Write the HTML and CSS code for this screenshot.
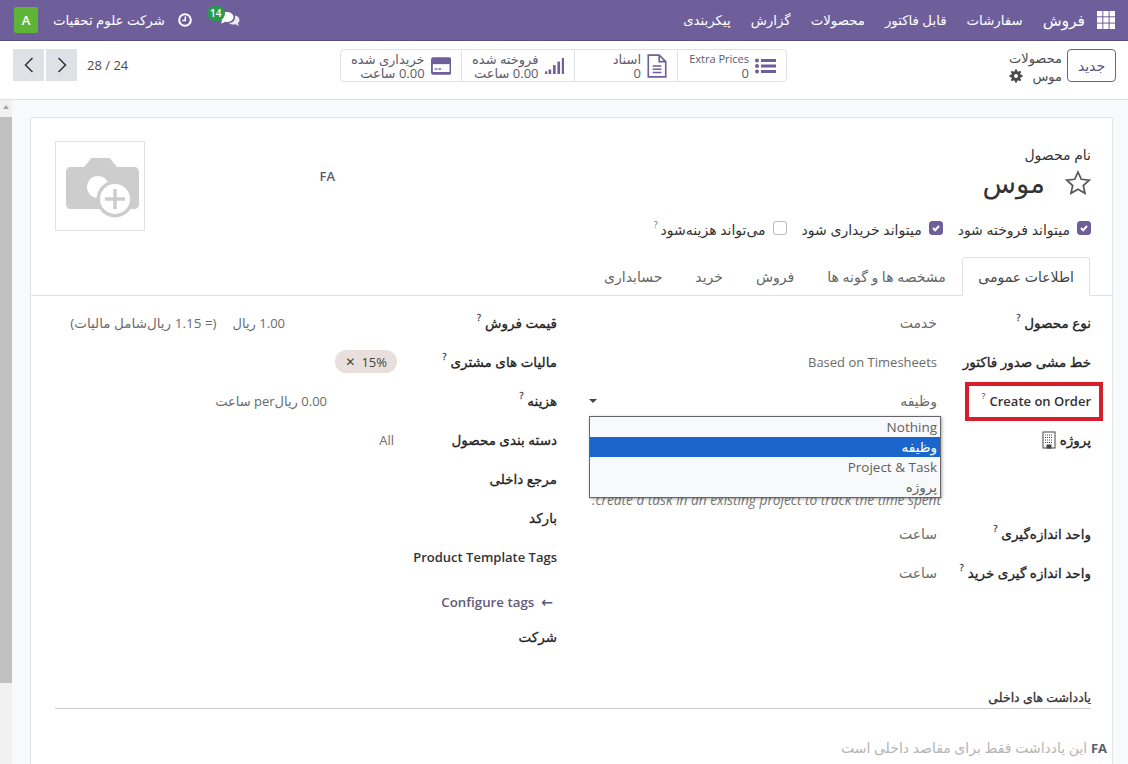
FILE: index.html
```html
<!DOCTYPE html>
<html lang="fa" dir="rtl">
<head>
    <meta charset="UTF-8">
    <title>موس</title>
    <link rel="stylesheet" href="styles.css">
</head>
<body>

    <!-- top menu -->
    <header class="navbar">
        <nav class="nav-menu">
            <svg class="apps-icon" viewBox="0 0 18 18" width="18" height="18" fill="#fff">
                <rect x="0" y="0" width="5.3" height="5.3"/><rect x="6.3" y="0" width="5.3" height="5.3"/><rect x="12.6" y="0" width="5.4" height="5.3"/>
                <rect x="0" y="6.3" width="5.3" height="5.3"/><rect x="6.3" y="6.3" width="5.3" height="5.3"/><rect x="12.6" y="6.3" width="5.4" height="5.3"/>
                <rect x="0" y="12.6" width="5.3" height="5.4"/><rect x="6.3" y="12.6" width="5.3" height="5.4"/><rect x="12.6" y="12.6" width="5.4" height="5.4"/>
            </svg>
            <a class="nav-brand">فروش</a>
            <a class="nav-link">سفارشات</a>
            <a class="nav-link">قابل فاکتور</a>
            <a class="nav-link">محصولات</a>
            <a class="nav-link">گزارش</a>
            <a class="nav-link">پیکربندی</a>
        </nav>
        <div class="nav-tools">
            <div class="chat-tool">
                <svg viewBox="0 0 20 16" width="20" height="16" fill="#fff">
                    <path d="M7 1c3.6 0 6.5 2.2 6.500 5s-2.900 5-6.500 5c-.8 0-1.500-.1-2.200-.3C3.600 11.700 2 12.200.6 12.300c.8-.8 1.400-1.800 1.500-2.900C1 8.500.5 7.300.5 6 .5 3.200 3.400 1 7 1z"/>
                    <path d="M15 4.500c2.600.5 4.500 2.300 4.500 4.400 0 1.200-.6 2.300-1.600 3.100.1 1 .6 2 1.400 2.700-1.300-.1-2.700-.6-3.800-1.500-.6.2-1.300.3-2 .3-1.800 0-3.400-.6-4.500-1.600 4 .1 6.700-2.700 6-7.400z" opacity=".85"/>
                </svg>
                <span class="chat-badge">14</span>
            </div>
            <svg class="clock-icon" viewBox="0 0 14 14" width="14" height="14">
                <circle cx="7" cy="7" r="5.800" fill="none" stroke="#fff" stroke-width="2"/>
                <path d="M7.300 3.500v4H4.300" fill="none" stroke="#fff" stroke-width="1.500"/>
            </svg>
            <span class="company">شرکت علوم تحقیات</span>
            <span class="avatar">A</span>
        </div>
    </header>

    <!-- breadcrumb, stat buttons, pager -->
    <section class="control-panel">
        <button class="btn-new">جدید</button>
        <div class="breadcrumb">
            <div>محصولات</div>
            <div class="crumb-current">موس
                <svg viewBox="0 0 14 14" width="14" height="14" fill="#4a4a4a"><path d="M6 0.500h2l.3 1.800 1.200.5L11 1.700l1.300 1.300-1.100 1.500.5 1.200 1.800.3v2l-1.800.3-.5 1.200 1.100 1.500L11 12.300l-1.500-1.100-1.200.5-.3 1.800H6l-.3-1.800-1.200-.5L3 12.300 1.700 11l1.100-1.500-.5-1.200L.5 8V6l1.800-.3.5-1.200L1.700 3 3 1.700l1.500 1.100 1.200-.5zM7 5a2 2 0 100 4 2 2 0 000-4z" fill-rule="evenodd"/></svg>
            </div>
        </div>
        <div class="stat-group">
            <div class="stat stat-extra">
                <svg viewBox="0 0 21 16" width="21" height="16" fill="#6e5f9b"><circle cx="2" cy="2.500" r="2"/><circle cx="2" cy="8" r="2"/><circle cx="2" cy="13.500" r="2"/><rect x="6" y="1" width="15" height="3"/><rect x="6" y="6.500" width="15" height="3"/><rect x="6" y="12" width="15" height="3"/></svg>
                <div class="stat-text"><div class="stat-latin">Extra Prices</div><div>0</div></div>
            </div>
            <div class="stat stat-docs">
                <svg viewBox="0 0 18 22" width="20" height="24" fill="none" stroke="#6e5f9b" stroke-width="1.500"><path d="M1 1h10l6 6v14H1zM11 1v6h6"/><path d="M5 11h8M5 14h8M5 17h8"/></svg>
                <div class="stat-text"><div>اسناد</div><div>0</div></div>
            </div>
            <div class="stat stat-sold">
                <svg viewBox="0 0 22 20" width="22" height="20" fill="#6e5f9b"><rect x="0" y="16" width="2.500" height="3"/><rect x="4" y="14" width="3" height="5"/><rect x="9" y="9" width="3" height="10"/><rect x="14" y="5" width="3" height="14"/><rect x="19" y="1" width="3" height="18"/></svg>
                <div class="stat-text"><div>فروخته شده</div><div>0.00 ساعت</div></div>
            </div>
            <div class="stat stat-bought">
                <svg viewBox="0 0 22 19" width="23" height="20"><rect x="0" y="0" width="22" height="19" rx="2.500" fill="#6e5f9b"/><rect x="2" y="7.500" width="18" height="8.500" fill="#fff"/><rect x="4" y="12" width="3" height="1.500" fill="#6e5f9b"/><rect x="8" y="12" width="3" height="1.500" fill="#6e5f9b"/></svg>
                <div class="stat-text"><div>خریداری شده</div><div>0.00 ساعت</div></div>
            </div>
        </div>
        <div class="pager">
            <span class="pager-count" dir="ltr">28 / 24</span>
            <button class="pager-btn">
                <svg viewBox="0 0 12 18" width="12" height="18" fill="none" stroke="#333" stroke-width="1.500"><path d="M2.500 2l7 7-7 7"/></svg>
            </button>
            <button class="pager-btn">
                <svg viewBox="0 0 12 18" width="12" height="18" fill="none" stroke="#333" stroke-width="1.500"><path d="M9.500 2l-7 7 7 7"/></svg>
            </button>
        </div>
    </section>

    <main class="content">
        <div class="sheet">

            <div class="product-head">
                <div class="head-main">
                    <div class="name-label">نام محصول</div>
                    <div class="name-row">
                        <svg viewBox="0 0 26 26" width="26" height="26" fill="none" stroke="#555" stroke-width="1.700"><path d="M13 2l3.300 7.300 7.900.9-5.900 5.300 1.700 7.800L13 19.300l-7 4 1.700-7.800-5.900-5.300 7.900-.9z"/></svg>
                        <span class="name-value">موس</span>
                    </div>
                    <div class="options">
                        <label class="option"><span class="check check-on"><svg viewBox="0 0 10 10" width="10" height="10" fill="none" stroke="#fff" stroke-width="2"><path d="M2 5l2.200 2.200L8 3"/></svg></span>میتواند فروخته شود</label>
                        <label class="option"><span class="check check-on"><svg viewBox="0 0 10 10" width="10" height="10" fill="none" stroke="#fff" stroke-width="2"><path d="M2 5l2.200 2.200L8 3"/></svg></span>میتواند خریداری شود</label>
                        <label class="option"><span class="check"></span>می‌تواند هزینه‌شود<sup class="hint">?</sup></label>
                    </div>
                </div>
                <div class="lang-mark">FA</div>
                <div class="image-box">
                    <svg viewBox="0 0 88 88" width="88" height="88">
                        <path d="M15 25h13l5-6c1-2 2-3 4-3h15c2 0 3 1 4 3l5 6h17c3 0 5 2 5 5v32c0 3-2 5-5 5H15c-3 0-5-2-5-5V30c0-3 2-5 5-5z" fill="#cdcdcd"/>
                        <circle cx="42" cy="45" r="11" fill="#fff"/>
                        <circle cx="59" cy="57" r="18.500" fill="#cdcdcd"/>
                        <circle cx="59" cy="57" r="15" fill="#fff"/>
                        <path d="M59 47v20M49 57h20" stroke="#cdcdcd" stroke-width="3.500"/>
                    </svg>
                </div>
            </div>

            <div class="tabs">
                <a class="tab tab-active">اطلاعات عمومی</a>
                <a class="tab">مشخصه ها و گونه ها</a>
                <a class="tab">فروش</a>
                <a class="tab">خرید</a>
                <a class="tab">حسابداری</a>
            </div>

            <div class="form-columns">
                <div class="group group-right">
                    <div class="row"><div class="label">نوع محصول<sup class="hint">?</sup></div><div class="value">خدمت</div></div>
                    <div class="row"><div class="label">خط مشی صدور فاکتور</div><div class="value value-latin">Based on Timesheets</div></div>
                    <div class="row"><div class="label label-latin">Create on Order<sup class="hint">?</sup></div>
                        <div class="value value-select">وظیفه<span class="caret"></span></div></div>
                    <div class="row"><div class="label">پروژه
                        <svg viewBox="0 0 14 18" width="14" height="18" fill="#fff" stroke="#444"><rect x="1" y="1" width="12" height="16"/><path d="M3 4h8M3 6.500h8M3 9h8M3 11.500h8" stroke-dasharray="1 1"/><rect x="5" y="14" width="4" height="3" fill="#444"/></svg>
                    </div></div>
                    <div class="field-note">create a task in an existing project to track the time spent.</div>
                    <div class="row"><div class="label">واحد اندازه‌گیری<sup class="hint">?</sup></div><div class="value">ساعت</div></div>
                    <div class="row"><div class="label">واحد اندازه گیری خرید<sup class="hint">?</sup></div><div class="value">ساعت</div></div>
                </div>

                <div class="group group-left">
                    <div class="row"><div class="label">قیمت فروش<sup class="hint">?</sup></div>
                        <div class="value value-price"><span class="price-main">1.00 ریال</span><span>(= 1.15 ریال‌شامل مالیات)</span></div></div>
                    <div class="row"><div class="label">مالیات های مشتری<sup class="hint">?</sup></div>
                        <div class="value value-chip"><span class="chip">15%<span class="chip-x">✕</span></span></div></div>
                    <div class="row"><div class="label">هزینه<sup class="hint">?</sup></div><div class="value value-cost">0.00 ریالper ساعت</div></div>
                    <div class="row"><div class="label">دسته بندی محصول</div><div class="value value-latin">All</div></div>
                    <div class="row"><div class="label">مرجع داخلی</div></div>
                    <div class="row"><div class="label">بارکد</div></div>
                    <div class="row"><div class="label label-latin">Product Template Tags</div></div>
                    <div class="configure"><span class="configure-arrow">←</span>Configure tags</div>
                    <div class="row"><div class="label">شرکت</div></div>
                </div>
            </div>

            <div class="notes">
                <div class="notes-title">یادداشت های داخلی</div>
                <div class="notes-text"><b>FA</b> این یادداشت فقط برای مقاصد داخلی است</div>
            </div>

            <!-- open select list and the marker drawn on the screenshot -->
            <ul class="select-list">
                <li>Nothing</li>
                <li class="selected">وظیفه</li>
                <li>Project &amp; Task</li>
                <li>پروژه</li>
            </ul>
            <div class="red-box"></div>
        </div>
        <div class="scrollbar"><span class="scroll-up"></span><div class="scroll-thumb"></div></div>
    </main>

</body>
</html>
```

FILE: styles.css
```css
* {
    box-sizing: border-box;
}
html, body {
    height: 100%;
}
body {
    margin: 0;
    overflow: hidden;
    font-family: "Open Sans", "DejaVu Sans", sans-serif;
    font-size: 14px;
    color: #4c4c4c;
    background-color: #f8f9fa;
}

/* navbar */
.navbar {
    height: 41px;
    padding: 0 13px 0 13px;
    display: flex;
    justify-content: space-between;
    align-items: center;
    background-color: #6e5f9b;
    border-bottom: 1px solid #5a5080;
    color: #fff;
}
.nav-menu, .nav-tools {
    display: flex;
    align-items: center;
}
.nav-brand {
    margin-right: 12px;
    font-size: 15.5px;
}
.nav-link {
    margin-right: 20px;
    font-size: 13.3px;
}
.chat-tool {
    position: relative;
    display: flex;
    margin-left: -2px;
    margin-top: -3px;
}
.chat-badge {
    position: absolute;
    top: -5px;
    right: 15px;
    width: 18px;
    text-align: center;
    border-radius: 8px;
    background-color: #2b9a4b;
    font-size: 10px;
    line-height: 15px;
    font-weight: 600;
}
.clock-icon {
    margin-right: 30px;
    margin-left: 13px;
}
.company {
    font-size: 13.3px;
}
.avatar {
    width: 24px;
    height: 26px;
    margin-right: 15px;
    margin-left: 1px;
    display: flex;
    align-items: center;
    justify-content: center;
    border-radius: 2px;
    background-color: #5fb336;
    font-size: 13px;
    font-weight: 600;
}

/* control panel */
.control-panel {
    height: 59px;
    padding: 8px 12px 0 13px;
    display: flex;
    align-items: flex-start;
    background-color: #fff;
    border-bottom: 1px solid #dee2e6;
}
.btn-new {
    width: 49px;
    height: 33px;
    padding: 0;
    font-family: inherit;
    font-size: 14px;
    color: #5a4f82;
    background-color: #fff;
    border: 1px solid #6e5f9b;
    border-radius: 4px;
}
.breadcrumb {
    width: 58px;
    margin-right: 5px;
    font-size: 13px;
    line-height: 18px;
}
.crumb-current {
    display: flex;
    align-items: center;
    gap: 9px;
}
.stat-group {
    display: flex;
    height: 33px;
    margin-right: 217px;
    border: 1px solid #dee2e6;
    border-radius: 4px;
}
.stat {
    display: flex;
    align-items: center;
    gap: 6px;
    padding: 0 10px;
    border-left: 1px solid #dee2e6;
    font-size: 13px;
    line-height: 14px;
    color: #5b5b6b;
}
.stat:last-child {
    border-left: none;
}
.stat-extra {
    width: 109px;
}
.stat-docs {
    width: 103px;
}
.stat-sold {
    width: 113px;
}
.stat-bought {
    width: 120px;
}
.stat-text {
    white-space: nowrap;
    text-align: right;
}
.stat-latin {
    font-size: 11px;
}
.pager {
    margin-right: auto;
    display: flex;
    align-items: center;
    height: 32px;
}
.pager-count {
    margin-left: 8px;
    font-size: 13px;
}
.pager-btn {
    width: 31px;
    height: 32px;
    margin-right: 2px;
    padding: 0;
    display: flex;
    align-items: center;
    justify-content: center;
    background-color: #dee2e6;
    border: none;
}

/* content area */
.content {
    height: calc(100% - 100px);
    display: flex;
    padding: 17px 15px 0 0;
}
.sheet {
    position: relative;
    flex: 1;
    height: 720px;
    background-color: #fff;
    border: 1px solid #dee2e6;
    border-radius: 2px 2px 0 0;
}
.scrollbar {
    position: relative;
    width: 12px;
    height: 764px;
    margin: -17px 18px 0 0;
    background-color: #f1f1f1;
}
.scroll-up {
    position: absolute;
    top: 5px;
    left: 3px;
    border: 3px solid transparent;
    border-top: none;
    border-bottom: 4px solid #a3a3a3;
}
.scroll-thumb {
    height: 566px;
    margin-top: 17px;
    background-color: #c1c1c1;
}

/* product header */
.product-head {
    height: 139px;
    padding: 23px 21px 0 24px;
    display: flex;
}
.head-main {
    flex: 1;
    padding-top: 3px;
}
.name-label {
    font-size: 14px;
    line-height: 22px;
    color: #333;
}
.name-row {
    display: flex;
    align-items: center;
    gap: 20px;
    height: 36px;
    margin-top: -1px;
}
.name-value {
    font-size: 27.5px;
    line-height: 36px;
    color: #333;
}
.options {
    display: flex;
    gap: 15px;
    margin-top: 19px;
    font-size: 14px;
    color: #333;
}
.option {
    display: flex;
    align-items: center;
    gap: 7px;
    line-height: 18px;
}
.check {
    width: 14px;
    height: 14px;
    margin-top: -4px;
    display: flex;
    align-items: center;
    justify-content: center;
    border: 1px solid #bbb;
    border-radius: 3px;
}
.check-on {
    background-color: #6e5f9b;
    border-color: #6e5f9b;
}
.hint {
    margin-bottom: 10px;
    font-size: 9px;
    line-height: 10px;
    color: #6e5f9b;
}
.option .hint {
    margin-right: -4px;
}
.lang-mark {
    width: 190px;
    margin-top: 26px;
    font-size: 13px;
    font-weight: 600;
    color: #5c5c70;
}
.image-box {
    width: 90px;
    height: 90px;
    border: 1px solid #dee2e6;
}

/* tabs */
.tabs {
    height: 39px;
    padding-right: 22px;
    display: flex;
    border-bottom: 1px solid #dee2e6;
    font-size: 14px;
    color: #666;
}
.tab {
    height: 39px;
    padding: 0 16.5px;
    display: flex;
    align-items: center;
}
.tab-active {
    height: 39px;
    padding: 0 15px;
    color: #444;
    background-color: #fff;
    border: 1px solid #dee2e6;
    border-bottom-color: #fff;
    border-radius: 3px 3px 0 0;
}

/* form */
.form-columns {
    display: flex;
    padding: 7px 21px 0 24px;
}
.group-right {
    width: 534px;
    flex: none;
}
.group-left {
    flex: 1;
}
.row {
    min-height: 39px;
    display: flex;
    align-items: center;
}
.label {
    width: 154px;
    flex: none;
    display: flex;
    align-items: center;
    gap: 4px;
    font-size: 13.5px;
    -webkit-text-stroke: 0.3px #222;
    color: #222;
    white-space: nowrap;
}
.group-left .label {
    width: 163px;
}
.label-latin {
    font-size: 13px;
    font-weight: 600;
    -webkit-text-stroke: 0;
    color: #333;
}
.value {
    flex: 1;
    font-size: 14px;
    color: #6b6b6b;
}
.value-latin {
    font-size: 13px;
}
.value-select {
    margin-left: 32px;
    display: flex;
    justify-content: space-between;
    align-items: center;
}
.caret {
    border: 4px solid transparent;
    border-top: 4px solid #444;
    border-bottom: none;
}
.field-note {
    height: 21px;
    margin-top: 30px;
    margin-bottom: 4px;
    margin-right: 150px;
    margin-left: 30px;
    font-size: 13.7px;
    line-height: 21px;
    font-style: italic;
    color: #777;
    white-space: nowrap;
}
.value-price {
    padding-right: 109px;
    display: flex;
    gap: 16px;
    font-size: 13.5px;
}
.price-main {
    font-size: 13px;
}
.value-chip {
    margin-right: -3px;
}
.chip {
    padding: 3px 10px 2px;
    display: inline-flex;
    gap: 6px;
    border-radius: 12px;
    background-color: #e9dfdd;
    font-size: 13px;
    color: #444;
}
.chip-x {
    font-size: 12px;
}
.value-cost {
    padding-right: 67px;
    font-size: 13px;
}
.configure {
    height: 20px;
    margin: 16px 0 5px;
    padding-right: 4px;
    font-size: 13.3px;
    line-height: 20px;
    font-weight: 600;
    color: #5f5a7a;
}
.configure-arrow {
    margin-left: 7px;
    font-size: 14px;
}

/* notes */
.notes {
    margin: 0 21px 0 24px;
    padding-top: 34px;
}
.notes-title {
    height: 19px;
    font-size: 12.5px;
    line-height: 16px;
    -webkit-text-stroke: 0.3px #333;
    color: #333;
    border-bottom: 1px solid #ccc;
}
.notes-text {
    margin-top: 29px;
    margin-right: -16px;
    font-size: 14px;
    color: #b5b5b5;
}
.notes-text b {
    font-size: 13px;
    color: #5c5c70;
}

/* overlays */
.select-list {
    position: absolute;
    top: 298px;
    left: 558px;
    width: 352px;
    margin: 0;
    padding: 0;
    list-style: none;
    background-color: #f8f9fa;
    border: 1px solid #666;
    box-shadow: 1px 1px 3px rgba(0, 0, 0, 0.35);
    font-size: 13.5px;
    color: #5f5f5f;
}
.select-list li {
    height: 20px;
    padding-right: 3px;
    line-height: 20px;
}
.select-list .selected {
    background-color: #1a66cc;
    color: #fff;
}
.red-box {
    position: absolute;
    top: 264px;
    left: 934px;
    width: 138px;
    height: 39px;
    border: 4px solid #d4202c;
}
```
